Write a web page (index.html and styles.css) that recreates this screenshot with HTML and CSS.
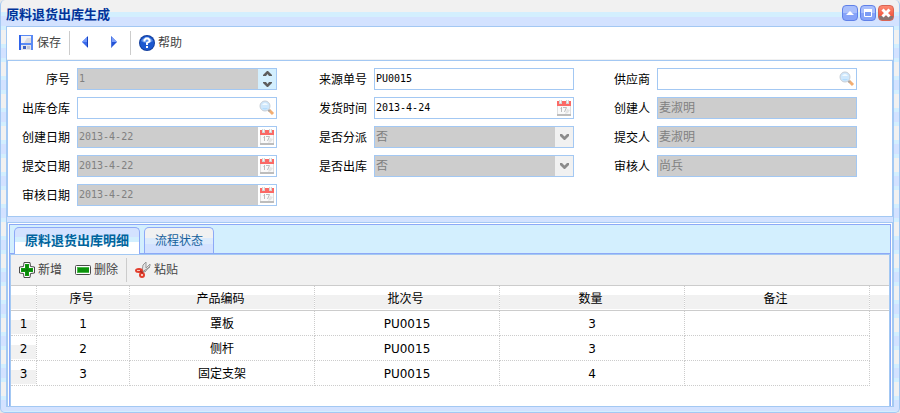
FILE: index.html
```
<!DOCTYPE html>
<html lang="zh-CN">
<head>
<meta charset="utf-8">
<title>原料退货出库生成</title>
<link rel="stylesheet" href="styles.css">
</head>
<body>
<svg class="defs" aria-hidden="true">
  <symbol id="calendar" viewBox="0 0 16 16">
    <path d="M1 5h14v10H1z" fill="#fafafa"/><path d="M1.500 5v10M14.500 5v10" stroke="#dedede"/>
    <path d="M1 14h14v2H1z" fill="#bdbdbd"/><path d="M1 1h14v5H1z" fill="#fb6a66"/>
    <path d="M3 0h3v4H3zM10 0h3v4h-3z" fill="#d5d5d5"/><path d="M4 0h1v3H4zM11 0h1v3h-1z" fill="#f7f7f7"/>
    <path d="M5.500 7v5M4.500 8.500h1M7 7.500h3.500L8.500 12" fill="none" stroke="#bcbcbc"/>
    <path d="M11 9l3 1-2 3-3 1" fill="#e4e4e4"/>
  </symbol>
  <symbol id="search" viewBox="0 0 16 16">
    <path d="M10 10l4 4" stroke="#f3ae72" stroke-width="3"/><path d="M9 10l2 1" stroke="#aaa" stroke-width="2"/>
    <circle cx="6" cy="6" r="5" fill="#cfe8fd" stroke="#c8ced6"/>
    <path d="M3 5q3-4 6 0z" fill="#f2faff"/><path d="M3 8q3 3 6 0z" fill="#b3dcfd"/>
  </symbol>
  <symbol id="chevron" viewBox="0 0 16 16"><path d="M4 5v2l4 4h1l4-4V5h-2L8.500 7.500 6 5z" fill="#8c8c8c"/></symbol>
</svg>
<main class="window">
  <header class="titlebar">
    <h1>原料退货出库生成</h1>
    <div class="win-buttons">
      <button class="win-btn" aria-label="收起"><svg viewBox="0 0 16 16"><path d="M4 10l4-4 4 4z" fill="#fff"/></svg></button>
      <button class="win-btn" aria-label="最大化"><svg viewBox="0 0 16 16"><path d="M4 4h8v8H4z" fill="#7b9cf5"/><path d="M4.500 5.500h7v6h-7z" fill="none" stroke="#fff"/><path d="M4 4h8v3H4z" fill="#fff"/></svg></button>
      <button class="win-btn close" aria-label="关闭"><svg viewBox="0 0 16 16"><path d="M4.500 4.500l7 7M11.500 4.500l-7 7" stroke="#fff" stroke-width="3"/></svg></button>
    </div>
  </header>
  <div class="content">
    <div class="toolbar main-tools">
      <button class="tool"><svg class="icon" viewBox="0 0 16 16"><path d="M1 0h14v15H1z" fill="#5a8af4"/><path d="M1 0h2v15H1z" fill="#2f63ea"/><path d="M3 1h10v7H3z" fill="#f3f3f6"/><path d="M9 3h4v5H6z" fill="#dcdce2"/><path d="M3 10h10v5H3z" fill="#e5e6ec"/><path d="M5 11h3v3H5z" fill="#3b5fc0"/><path d="M9 11h3v3H9z" fill="#c3c6d4"/></svg>保存</button>
      <span class="sep"></span>
      <button class="tool arrow" aria-label="上一个"><svg class="icon" viewBox="0 0 16 16"><path d="M10 1v12L4 7z" fill="#3b6bea"/><path d="M10 1v6H4z" fill="#6e96fa"/><path d="M9.500 2v10" stroke="#1740bc"/></svg></button>
      <button class="tool arrow" aria-label="下一个"><svg class="icon" viewBox="0 0 16 16"><path d="M5 1v12l6-6z" fill="#2554d8"/><path d="M5 1v6h6z" fill="#7a9dfa"/><path d="M5.500 2v10" stroke="#4e76df"/></svg></button>
      <span class="sep"></span>
      <button class="tool"><svg class="icon" viewBox="0 0 16 16"><circle cx="8" cy="8" r="8" fill="#123e9e"/><circle cx="8" cy="8" r="7" fill="#1c58cf"/><path d="M2 6q6-8 12 0-6 4-12 0z" fill="#5e92ea"/><path d="M5.500 6.500V5L7 3.500h2L10.500 5v1.500L8 8v2" fill="none" stroke="#fff" stroke-width="2"/><path d="M7 11h2v2H7z" fill="#fff"/></svg>帮助</button>
    </div>
    <form class="fields">
      <div class="group">
        <div class="field"><label for="no">序号</label><div class="box off"><input id="no" class="num" value="1" disabled><button type="button" class="pick spin" aria-label="调整" disabled><svg viewBox="0 0 18 20"><path d="M5 6v1h3l1.500-2L11 7h3V6l-4-4H9zM5 13v1l4 4h1l4-4v-1h-3l-1.500 2L8 13z" fill="#5d5d5d"/></svg></button></div></div>
        <div class="field"><label for="wh">出库仓库</label><div class="box"><input id="wh"><button type="button" class="pick" aria-label="查找"><svg class="icon"><use href="#search"/></svg></button></div></div>
        <div class="field"><label for="d1">创建日期</label><div class="box off"><input id="d1" class="num" value="2013-4-22" disabled><button type="button" class="pick" aria-label="日历" disabled><svg class="icon"><use href="#calendar"/></svg></button></div></div>
        <div class="field"><label for="d2">提交日期</label><div class="box off"><input id="d2" class="num" value="2013-4-22" disabled><button type="button" class="pick" aria-label="日历" disabled><svg class="icon"><use href="#calendar"/></svg></button></div></div>
        <div class="field"><label for="d3">审核日期</label><div class="box off"><input id="d3" class="num" value="2013-4-22" disabled><button type="button" class="pick" aria-label="日历" disabled><svg class="icon"><use href="#calendar"/></svg></button></div></div>
      </div>
      <div class="group">
        <div class="field"><label for="src">来源单号</label><div class="box"><input id="src" class="num" value="PU0015"></div></div>
        <div class="field"><label for="ship">发货时间</label><div class="box"><input id="ship" class="num" value="2013-4-24"><button type="button" class="pick" aria-label="日历"><svg class="icon"><use href="#calendar"/></svg></button></div></div>
        <div class="field"><label for="s1">是否分派</label><div class="box off"><select id="s1" disabled><option>否</option></select><span class="pick drop"><svg class="icon"><use href="#chevron"/></svg></span></div></div>
        <div class="field"><label for="s2">是否出库</label><div class="box off"><select id="s2" disabled><option>否</option></select><span class="pick drop"><svg class="icon"><use href="#chevron"/></svg></span></div></div>
      </div>
      <div class="group">
        <div class="field"><label for="sup">供应商</label><div class="box"><input id="sup"><button type="button" class="pick" aria-label="查找"><svg class="icon"><use href="#search"/></svg></button></div></div>
        <div class="field"><label for="p1">创建人</label><div class="box off"><input id="p1" value="麦淑明" disabled></div></div>
        <div class="field"><label for="p2">提交人</label><div class="box off"><input id="p2" value="麦淑明" disabled></div></div>
        <div class="field"><label for="p3">审核人</label><div class="box off"><input id="p3" value="尚兵" disabled></div></div>
      </div>
    </form>
    <section class="detail">
      <div class="tab-panel">
        <div class="tabs">
          <button class="tab active">原料退货出库明细</button>
          <button class="tab">流程状态</button>
        </div>
        <div class="grid-panel">
          <div class="toolbar grid-tools">
            <button class="tool"><svg class="icon" viewBox="0 0 16 16"><path d="M5 .5h6l.5 4 4 .5v6l-4 .5-.5 4H5l-.5-4-4-.5V5l4-.5z" fill="#fff" stroke="#4b4b4b"/><path d="M6 2h4v4h4v4h-4v4H6v-4H2V6h4z" fill="#0d990d"/><path d="M8 3v10M3 8h10" stroke="#087108"/></svg>新增</button>
            <button class="tool"><svg class="icon" viewBox="0 0 16 16"><rect x=".5" y="3.500" width="15" height="9" rx="1" fill="#fff" stroke="#4b4b4b"/><path d="M2 5h12v6H2z" fill="#4ab84a"/><path d="M3 6h11v4H3z" fill="#0c920c"/></svg>删除</button>
            <span class="sep"></span>
            <button class="tool"><svg class="icon" viewBox="0 0 16 16"><path d="M7 9l1-6 3-3v6l4-4v2l-5 6z" fill="#e4e4e4" stroke="#999"/><path d="M7 10l8-5" stroke="#909090"/><ellipse cx="4" cy="8.500" rx="4" ry="2.500" fill="#e23f2e"/><circle cx="7" cy="13" r="3" fill="#e23f2e"/><path d="M2 8h3v1H2zM6 12h2v2H6z" fill="#f9c4ba"/><path d="M5 9l3 2" stroke="#b92a20" stroke-width="2"/></svg>粘贴</button>
          </div>
          <table>
            <thead><tr><th class="rownum"></th><th class="seq">序号</th><th>产品编码</th><th>批次号</th><th>数量</th><th>备注</th><th class="rest"></th></tr></thead>
            <tbody>
              <tr><td class="rownum">1</td><td>1</td><td>罩板</td><td>PU0015</td><td>3</td><td></td><td class="rest"></td></tr>
              <tr><td class="rownum">2</td><td>2</td><td>侧杆</td><td>PU0015</td><td>3</td><td></td><td class="rest"></td></tr>
              <tr><td class="rownum">3</td><td>3</td><td>固定支架</td><td>PU0015</td><td>4</td><td></td><td class="rest"></td></tr>
            </tbody>
          </table>
        </div>
      </div>
    </section>
  </div>
</main>
</body>
</html>
```
FILE: styles.css
```
:root {
  --line: #a3c8f3;
  --edge: #8da9f7;
  --blue: #d3e2ff;
  --cyan: #d3effe;
  --gray: #f1f1f1;
}
* { box-sizing: border-box; }
body {
  margin: 0;
  background: #e8e8e8;
  color: #000;
  font: 12px/16px "DejaVu Sans", "Noto Sans CJK SC", sans-serif;
}
button, input, select { margin: 0; padding: 0; border: 0; background: none; color: inherit; font: inherit; }
.defs { position: absolute; width: 0; height: 0; }
.icon { display: block; width: 16px; height: 16px; flex: none; }

.window {
  display: flex;
  flex-direction: column;
  min-height: 100vh;
  padding: 0 5px 5px;
  border: 1px solid var(--line);
  border-top: 0;
  border-radius: 5px;
  background:
    linear-gradient(var(--blue) 4px, var(--cyan) 4px) bottom / 100% 5px no-repeat,
    repeating-linear-gradient(var(--gray) 0 12px, var(--cyan) 12px 16px, var(--blue) 16px 26px, var(--cyan) 26px 30px, var(--gray) 30px 32px);
}
.titlebar {
  display: flex;
  align-items: center;
  justify-content: space-between;
  height: 26px;
  background: linear-gradient(var(--gray) 12px, var(--cyan) 12px 17px, var(--blue) 17px);
}
.titlebar h1 { margin: 4px 0 0; color: #003399; font-size: 13px; line-height: 16px; font-weight: 700; }
.win-buttons { display: flex; gap: 2px; }
.win-btn {
  width: 16px;
  height: 16px;
  border: 1px solid #5f80e8;
  border-radius: 4px;
  background: linear-gradient(#a9bffc 50%, #86a3f8 50%);
}
.win-btn svg { display: block; width: 16px; height: 16px; margin: -1px; }
.win-btn.close { border-color: #d96453; background: linear-gradient(#fd8a72, #f2553c 75%, #8b7470 75%); }

.content { display: flex; flex: 1; flex-direction: column; border: 1px solid var(--line); background: var(--blue); }
.toolbar { display: flex; align-items: center; color: #444; }
.main-tools { height: 33px; padding: 0 11px; border-bottom: 1px solid var(--gray); background: #fff; }
.tool { display: flex; align-items: center; gap: 3px; padding: 0; }
.sep { width: 1px; height: 24px; margin: 0 8px; background: #ccc; }
.tool.arrow { width: 16px; }
.tool.arrow + .tool.arrow { margin-left: 12px; }

.fields {
  display: grid;
  grid-template-columns: 269fr 297fr 283fr;
  padding: 7px 35px 10px 0;
  border: 1px solid var(--line);
  background: #fff;
}
.group { display: flex; flex-direction: column; gap: 7px; }
.field { display: flex; align-items: center; justify-content: flex-end; gap: 7px; }
.field label { padding-top: 2px; }
.box { display: flex; width: 200px; height: 22px; border: 1px solid var(--line); background: #fff; }
.box input, .box select { flex: 1; min-width: 0; padding: 0 1px; appearance: none; border-radius: 0; outline: 0; }
.box .num { font-family: "DejaVu Sans Mono", monospace; font-size: 10px; }
.off input, .off select { background: #cdcdcd; color: #808080; opacity: 1; }
.pick { display: flex; align-items: center; justify-content: center; width: 18px; background: #fff; }
.spin { background: var(--cyan); }
.spin svg { flex: none; width: 18px; height: 20px; }
.drop { background: var(--gray); }

.detail { display: flex; flex: 1; margin-top: 5px; padding: 1px 1px 0; border: 1px solid var(--line); border-bottom: 0; background: #fff; }
.tab-panel { display: flex; flex: 1; flex-direction: column; min-width: 0; border: 1px solid var(--edge); border-bottom: 0; background: var(--cyan); }
.tabs { display: flex; align-items: flex-end; gap: 4px; height: 29px; padding: 0 4px; border-bottom: 1px solid var(--edge); }
.tab {
  height: 26px;
  padding: 0 10px;
  border: 1px solid var(--edge);
  border-bottom: 0;
  border-radius: 5px 5px 0 0;
  background: linear-gradient(var(--gray) 10px, #dcebfc 10px 16px, var(--blue) 16px);
  color: #15609b;
}
.tab.active {
  height: 27px;
  margin-bottom: -1px;
  background: linear-gradient(var(--blue) 9px, var(--cyan) 9px 14px, #fff 14px);
  color: #00649d;
  font-size: 13px;
  font-weight: 700;
}
.grid-panel { flex: 1; border: 1px solid var(--line); border-bottom: 0; background: #fff; }
.grid-tools { height: 31px; padding: 0 8px; border-bottom: 1px solid #ccc; background: var(--gray); }
.tool + .tool:not(.arrow) { margin-left: 13px; }

table { width: 100%; table-layout: fixed; border-spacing: 0; text-align: center; }
th, td { height: 25px; padding: 2px 0 0; border: 0 dotted #ccc; border-width: 0 1px 1px 0; font-weight: 400; }
th { padding-right: 3px; border-bottom-style: solid; background: linear-gradient(#fff 9px, var(--gray) 9px 23px, #fff 23px) padding-box; }
.rownum { width: 26px; }
td.rownum { background: linear-gradient(#fff 9px, var(--gray) 9px 23px, #fff 23px) padding-box; }
.seq { width: 93px; }
.rest { width: 19px; border-right: 0; }
td.rest { border: 0; }
```
